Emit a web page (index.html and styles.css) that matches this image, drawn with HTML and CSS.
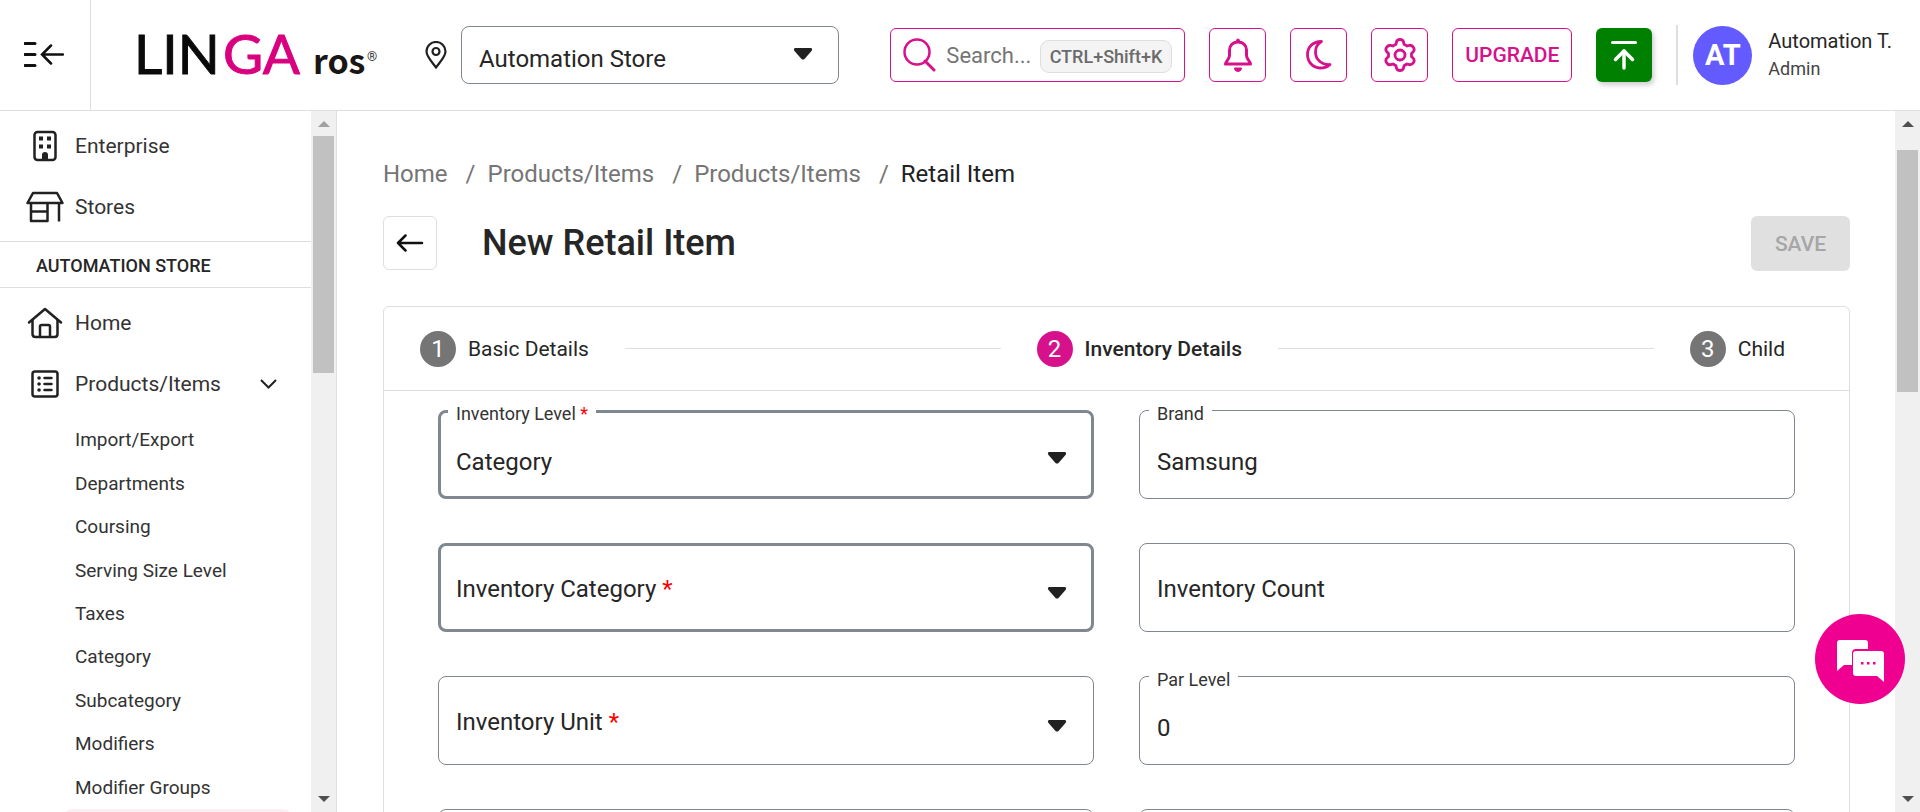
FILE: index.html
```html
<!DOCTYPE html>
<html lang="en">
<head>
<meta charset="utf-8">
<title>New Retail Item</title>
<meta name="viewport" content="width=device-width, initial-scale=1">
<link rel="stylesheet" href="styles.css">
</head>
<body>
<header class="topbar">
  <button class="collapse" aria-label="Collapse menu">
    <svg width="40" height="26" viewBox="0 0 40 26" fill="none" stroke="#111" stroke-width="3" stroke-linecap="round"><path d="M1 1.500H11M1 12.500H11M1 23.500H11"/><path d="M18 12.500H39M27 3.500L18 12.500L27 21.500" stroke-width="2.500"/></svg>
  </button>
  <a class="logo" href="#" aria-label="Linga ros">
    <svg width="244" height="44" viewBox="0 0 244 44">
      <text class="logo-main" x="-5" y="41">LIN</text>
      <text class="logo-main logo-pink" x="84" y="41">GA</text>
      <text class="logo-sub" x="174" y="41">ros</text>
      <text class="logo-reg" x="228" y="28">®</text>
    </svg>
  </a>
  <div class="store">
    <svg width="22" height="28" viewBox="0 0 22 28" fill="none" stroke="#212121" stroke-width="2.200"><path d="M11 26.500C7 21 1.500 15.500 1.500 10.500a9.500 9.500 0 0 1 19 0C20.500 15.500 15 21 11 26.500Z" stroke-linejoin="round"/><circle cx="11" cy="10.500" r="3.500"/></svg>
    <div class="store-box">
      <select class="store-select" aria-label="Store"><option>Automation Store</option></select>
      <svg class="store-caret" width="20" height="12" viewBox="0 0 20 12"><path d="M2 0H18Q20 1 18.500 3L11.500 11Q10 12 8.500 11L1.500 3Q0 1 2 0Z" fill="#212121"/></svg>
    </div>
  </div>
  <div class="actions">
    <label class="search">
      <svg width="33" height="34" viewBox="0 0 33 34" fill="none" stroke="#d6118b" stroke-width="2.500"><circle cx="14" cy="14" r="12.500"/><path d="M22 23L31 32" stroke-width="3" stroke-linecap="round"/></svg>
      <input class="search-input" type="text" placeholder="Search...">
      <kbd class="shortcut">CTRL+Shift+K</kbd>
    </label>
    <button class="icon-btn" aria-label="Notifications">
      <svg width="28" height="34" viewBox="0 0 28 34"><path d="M14 4C8.500 4 5.500 8 5.500 12V17.500C5.500 21 2 23 1.500 26H26.500C26 23 22.500 21 22.500 17.500V12C22.500 8 19.500 4 14 4Z" fill="none" stroke="#d6118b" stroke-width="3" stroke-linejoin="round"/><path d="M12.500 4V2.500a1.500 1.500 0 0 1 3 0V4ZM10.500 30H17.500a3.500 3.500 0 0 1-7 0Z" fill="#d6118b" stroke="#d6118b" stroke-width="1"/></svg>
    </button>
    <button class="icon-btn" aria-label="Dark mode">
      <svg width="26" height="30" viewBox="0 0 26 30"><path d="M15.500 1.500C6 1.500 1.500 8 1.500 14.500C1.500 22 7 28 14 28C18.500 28 22 26.500 24 24.500C15.500 25 9.500 19.500 9.500 12C9.500 7.500 12 3.500 15.500 1.500Z" fill="none" stroke="#d6118b" stroke-width="2.800" stroke-linejoin="round"/></svg>
    </button>
    <button class="icon-btn" aria-label="Settings">
      <svg width="32" height="34" viewBox="0 0 32 34" fill="none" stroke="#d6118b" stroke-width="2.800" stroke-linejoin="round"><path d="M12.500 4Q13 1.500 16 1.500T19.500 4L20.200 6.500Q21.500 7 23 8L25.500 7.300Q28 6.800 29.500 9.500T29 14L27.500 15.500V18.500L29 20Q31 22 29.500 24.500T25.500 26.700L23 26Q21.500 27 20.200 27.500L19.500 30Q19 32.500 16 32.500T12.500 30L11.800 27.500Q10.500 27 9 26L6.500 26.700Q4 27.200 2.500 24.500T3 20L4.500 18.500V15.500L3 14Q1 12 2.500 9.500T6.500 7.300L9 8Q10.500 7 11.800 6.500Z"/><circle cx="16" cy="17" r="5"/></svg>
    </button>
    <button class="upgrade">UPGRADE</button>
    <button class="upload" aria-label="Upload">
      <svg width="26" height="30" viewBox="0 0 26 30" fill="none" stroke="#fff" stroke-width="3.500"><path d="M1.500 2.500H24.500" stroke-width="3" stroke-linecap="round"/><path d="M13 28V11" stroke-linecap="round"/><path d="M4.500 19.500L13 11L21.500 19.500" stroke-linecap="round" stroke-linejoin="round"/></svg>
    </button>
    <div class="user">
      <span class="avatar">AT</span>
      <span class="user-text"><span class="user-name">Automation T.</span><span class="user-role">Admin</span></span>
    </div>
  </div>
</header>
<div class="body">
  <aside class="sidebar">
    <nav class="nav">
      <div class="group group-top">
        <a class="nav-item" href="#"><span class="nav-icon"><svg width="24" height="32" viewBox="0 0 24 32"><rect x="1.500" y="2" width="21" height="28" rx="3" fill="none" stroke="#212121" stroke-width="2.500"/><path d="M6 6.500h4v4H6zM14 6.500h4v4h-4zM6 14.500h4v4H6zM14 14.500h4v4h-4zM9 30v-5a3 3 0 0 1 6 0v5Z" fill="#212121"/></svg></span>Enterprise</a>
        <a class="nav-item" href="#"><span class="nav-icon"><svg width="38" height="32" viewBox="0 0 38 32" fill="none" stroke="#212121" stroke-width="2.500" stroke-linejoin="round"><path d="M7 2H31L36.500 12H1.500ZM5 12V30H21.500V12M5 20.500H21.500M33 12V30.500"/></svg></span>Stores</a>
      </div>
      <div class="section">AUTOMATION STORE</div>
      <div class="group group-main">
        <a class="nav-item" href="#"><span class="nav-icon"><svg width="36" height="32" viewBox="0 0 36 32" fill="none" stroke="#212121" stroke-width="2.500" stroke-linecap="round" stroke-linejoin="round"><path d="M2 15.500L18 2L34 15.500"/><path d="M5.500 13V27Q5.500 30 8.500 30H27.500Q30.500 30 30.500 27V13M13 30V19.500Q13 18 14.500 18H21.500Q23 18 23 19.500V30"/></svg></span>Home</a>
        <a class="nav-item" href="#"><span class="nav-icon"><svg width="28" height="28" viewBox="0 0 28 28" fill="none" stroke="#212121" stroke-width="2.500" stroke-linecap="round"><rect x="1.500" y="1.500" width="25" height="25" rx="2.500"/><path d="M13.500 8H20.500M13.500 14H20.500M13.500 20H20.500"/><path d="M8 8h.1M8 14h.1M8 20h.1" stroke-width="3.500"/></svg></span>Products/Items<svg class="chevron" width="17" height="10" viewBox="0 0 17 10" fill="none" stroke="#212121" stroke-width="2"><path d="M1 1L8.500 8.500L16 1"/></svg></a>
      </div>
      <div class="subnav">
        <a href="#">Import/Export</a>
        <a href="#">Departments</a>
        <a href="#">Coursing</a>
        <a href="#">Serving Size Level</a>
        <a href="#">Taxes</a>
        <a href="#">Category</a>
        <a href="#">Subcategory</a>
        <a href="#">Modifiers</a>
        <a href="#">Modifier Groups</a>
      </div>
      <a class="active-item" href="#" aria-label="Current page"></a>
    </nav>
    <div class="scroll scroll-side" aria-hidden="true"><span class="arrow-up dim"></span><span class="thumb thumb-side"></span><span class="arrow-down"></span></div>
  </aside>
  <main class="main">
    <nav class="crumbs" aria-label="Breadcrumb">
      <a href="#">Home</a><span class="sep">/</span><a href="#">Products/Items</a><span class="sep">/</span><a href="#">Products/Items</a><span class="sep">/</span><span class="current">Retail Item</span>
    </nav>
    <div class="title-row">
      <button class="back" aria-label="Back"><svg width="28" height="18" viewBox="0 0 28 18" fill="none" stroke="#111" stroke-width="2.500" stroke-linecap="round" stroke-linejoin="round"><path d="M26 9H2M9.500 1.500L2 9L9.500 16.500"/></svg></button>
      <h1 class="title">New Retail Item</h1>
      <button class="save" disabled>SAVE</button>
    </div>
    <section class="card">
      <div class="stepper">
        <span class="step"><span class="num">1</span>Basic Details</span>
        <span class="line"></span>
        <span class="step step-on"><span class="num">2</span>Inventory Details</span>
        <span class="line"></span>
        <span class="step"><span class="num">3</span>Child</span>
      </div>
      <form class="fields">
        <div class="field strong floated">
          <select id="level"><option>Category</option></select>
          <label for="level">Inventory Level <span class="req">*</span></label>
          <svg class="caret" width="20" height="12" viewBox="0 0 20 12"><path d="M2 0H18Q20 1 18.500 3L11.500 11Q10 12 8.500 11L1.500 3Q0 1 2 0Z"/></svg>
        </div>
        <div class="field floated">
          <input id="brand" type="text" value="Samsung">
          <label for="brand">Brand</label>
        </div>
        <div class="field strong">
          <select id="category"><option></option></select>
          <label for="category">Inventory Category <span class="req">*</span></label>
          <svg class="caret" width="20" height="12" viewBox="0 0 20 12"><path d="M2 0H18Q20 1 18.500 3L11.500 11Q10 12 8.500 11L1.500 3Q0 1 2 0Z"/></svg>
        </div>
        <div class="field">
          <input id="count" type="text">
          <label for="count">Inventory Count</label>
        </div>
        <div class="field">
          <select id="unit"><option></option></select>
          <label for="unit">Inventory Unit <span class="req">*</span></label>
          <svg class="caret" width="20" height="12" viewBox="0 0 20 12"><path d="M2 0H18Q20 1 18.500 3L11.500 11Q10 12 8.500 11L1.500 3Q0 1 2 0Z"/></svg>
        </div>
        <div class="field floated">
          <input id="par" type="text" value="0">
          <label for="par">Par Level</label>
        </div>
        <div class="field"><input type="text" aria-label="Next field"></div>
        <div class="field"><input type="text" aria-label="Next field"></div>
      </form>
    </section>
  </main>
  <div class="scroll" aria-hidden="true"><span class="arrow-up"></span><span class="thumb thumb-main"></span><span class="arrow-down"></span></div>
</div>
<button class="chat" aria-label="Chat">
  <svg width="48" height="43" viewBox="0 0 48 43"><path d="M3 0H28Q31 0 31 3V9H19Q15 9 15 13V25H7L0 31V3Q0 0 3 0Z" fill="#fff"/><path d="M19 11H44Q47 11 47 14V42L40 36H19Q16 36 16 33V14Q16 11 19 11Z" fill="#fff"/><path d="M24 22h2.500v2.500H24zM30 22h2.500v2.500H30zM36 22h2.500v2.500H36z" fill="#f00091"/></svg>
</button>
</body>
</html>
```
FILE: styles.css
```css
* { box-sizing: border-box; }

body {
  margin: 0;
  height: 100vh;
  display: flex;
  flex-direction: column;
  overflow: hidden;
  background: #fff;
  color: #262626;
  font-family: Roboto, "Liberation Sans", sans-serif;
  font-size: 24px;
}

a { color: inherit; text-decoration: none; }
button, input, select { font: inherit; color: inherit; margin: 0; }
svg { display: block; flex: none; }

/* Top bar */
.topbar {
  flex: none;
  height: 111px;
  display: flex;
  align-items: center;
  border-bottom: 1px solid #dedede;
}
.collapse {
  align-self: stretch;
  width: 91px;
  padding: 0 3px 0 0;
  border: 0;
  border-right: 1px solid #dedede;
  background: none;
  display: flex;
  align-items: center;
  justify-content: center;
}
.logo { margin-left: 48px; }
.logo svg { overflow: visible; }
.logo-main { font-family: Lato, sans-serif; font-size: 55px; fill: #0a0a0a; stroke: #0a0a0a; stroke-width: 1px; }
.logo-pink { fill: #d9007f; stroke: #d9007f; }
.logo-sub { font-family: "Noto Sans CJK JP", sans-serif; font-weight: 700; font-size: 34px; fill: #1a1616; }
.logo-reg { font-size: 13px; fill: #333; }
.store { display: flex; align-items: center; gap: 14px; margin-left: 42px; }
.store-box { position: relative; width: 378px; }
.store-select {
  appearance: none;
  width: 100%;
  height: 58px;
  padding: 8px 48px 0 17px;
  border: 1px solid #7f8790;
  border-radius: 8px;
  background: #fff;
}
.store-caret { position: absolute; right: 26px; top: 22px; }
.actions { margin-left: auto; display: flex; align-items: center; gap: 24px; padding-right: 28px; }
.search {
  display: flex;
  align-items: center;
  width: 295px;
  height: 54px;
  padding: 0 12px;
  border: 1px solid #d6118b;
  border-radius: 6px;
}
.search-input {
  flex: 1;
  min-width: 0;
  padding: 0 0 0 10px;
  border: 0;
  outline: 0;
  background: none;
  font-size: 22px;
}
.search-input::placeholder { color: #757575; opacity: 1; }
.shortcut {
  height: 33px;
  margin-top: 3px;
  padding: 0 9px;
  border: 1px solid #dedede;
  border-radius: 9px;
  background: #f4f4f4;
  color: #6b6b6b;
  font: 500 18px/32px Roboto, sans-serif;
}
.icon-btn, .upgrade {
  height: 54px;
  padding: 0;
  border: 1px solid #d6118b;
  border-radius: 6px;
  background: #fff;
  color: #d6118b;
  display: flex;
  align-items: center;
  justify-content: center;
}
.icon-btn { width: 57px; }
.upgrade { width: 120px; font-size: 21px; font-weight: 500; }
.upload {
  width: 56px;
  height: 54px;
  padding: 0;
  border: 0;
  border-radius: 6px;
  background: #008000;
  box-shadow: 2px 3px 5px #0003;
  display: flex;
  align-items: center;
  justify-content: center;
}
.user { display: flex; align-items: center; gap: 16px; height: 60px; padding-left: 15px; border-left: 2px solid #dedede; }
.avatar {
  width: 59px;
  height: 59px;
  border-radius: 50%;
  background: #635bff;
  color: #fff;
  font: 700 29px/59px Roboto, sans-serif;
  text-align: center;
}
.user-text { display: flex; flex-direction: column; gap: 4px; }
.user-name { font-size: 20px; line-height: 24px; }
.user-role { font-size: 18px; line-height: 24px; color: #444; }

/* Sidebar */
.body { flex: 1; min-height: 0; display: flex; }
.sidebar { flex: none; width: 337px; display: flex; border-right: 1px solid #dedede; }
.nav { flex: 1; overflow: auto; scrollbar-width: none; }
.group { display: flex; flex-direction: column; }
.group-top { padding: 4px 0; }
.group-main { padding: 4px 0 0; }
.nav-item { display: flex; align-items: center; height: 61px; font-size: 21px; color: #333; }
.nav-icon { width: 75px; margin-left: 7px; margin-right: -7px; display: flex; justify-content: center; }
.chevron { margin-left: auto; margin-right: 34px; }
.section {
  height: 47px;
  padding-left: 36px;
  border: solid #dedede;
  border-width: 1px 0;
  font-size: 18px;
  line-height: 48px;
  font-weight: 500;
}
.subnav { display: grid; grid-auto-rows: 1fr; height: 391px; margin-top: 4px; padding-left: 75px; font-size: 19px; color: #333; }
.subnav a { display: flex; align-items: center; }
.active-item { display: block; height: 44px; margin: 0 18px 0 62px; border-radius: 10px; background: #fceff3; }

/* Scroll bars */
.scroll {
  flex: none;
  width: 25px;
  padding: 10px 0;
  background: #f0f0f0;
  display: flex;
  flex-direction: column;
  align-items: center;
}
.arrow-up, .arrow-down { border: 6px solid transparent; border-width: 0 6px; }
.arrow-up { border-bottom: 6px solid #505050; }
.arrow-up.dim { border-bottom-color: #a0a0a0; }
.arrow-down { border-top: 6px solid #505050; margin-top: auto; }
.thumb { width: 21px; background: #c1c1c1; }
.thumb-side { height: 237px; margin-top: 9px; }
.thumb-main { height: 242px; margin-top: 23px; }

/* Page content */
.main { flex: 1; min-width: 0; overflow: auto; scrollbar-width: none; padding: 48px 45px 0 46px; }
.crumbs { display: flex; line-height: 30px; color: #757575; }
.sep { padding: 0 12px 0 18px; }
.current { color: #212121; }
.title-row { display: flex; align-items: flex-start; margin-top: 27px; }
.back {
  width: 54px;
  height: 54px;
  padding: 0;
  border: 1px solid #dedede;
  border-radius: 6px;
  background: #fff;
  display: flex;
  align-items: center;
  justify-content: center;
}
.title { margin: 0 0 0 45px; font-size: 36px; line-height: 54px; font-weight: 500; }
.save {
  margin-left: auto;
  width: 99px;
  height: 55px;
  padding: 0;
  border: 0;
  border-radius: 6px;
  background: #e0e0e0;
  color: #a6a6a6;
  font-size: 21px;
  font-weight: 500;
}
.card { margin-top: 35px; border: 1px solid #dedede; border-radius: 6px; }
.stepper {
  display: flex;
  align-items: center;
  gap: 36px;
  height: 84px;
  padding: 0 64px 0 36px;
  border-bottom: 1px solid #dedede;
  font-size: 21px;
}
.step { display: flex; align-items: center; gap: 12px; }
.step-on { font-weight: 500; }
.num {
  width: 36px;
  height: 36px;
  border-radius: 50%;
  background: #757575;
  color: #fff;
  font-size: 24px;
  line-height: 36px;
  font-weight: 400;
  text-align: center;
}
.step-on .num { background: #d6118b; }
.line { flex: 1; height: 1px; background: #dedede; }

.fields { display: grid; grid-template-columns: 1fr 1fr; gap: 44px 45px; padding: 19px 54px; }
.field { position: relative; }
.field input, .field select {
  display: block;
  appearance: none;
  width: 100%;
  height: 89px;
  padding: 14px 17px 0;
  border: 1px solid #7f8790;
  border-radius: 8px;
  background: #fff;
  outline: 0;
}
.field.strong select { border-width: 3px; padding: 14px 15px 0; }
.field label { position: absolute; left: 18px; top: 30px; line-height: 32px; pointer-events: none; }
.field.floated label { left: 10px; top: -8px; padding: 0 8px; background: #fff; font-size: 18px; line-height: 24px; color: #333; }
.req { color: #f00; }
.caret { position: absolute; right: 27px; top: 44px; fill: #212121; pointer-events: none; }
.floated .caret { top: 42px; }

.chat {
  position: fixed;
  right: 15px;
  bottom: 108px;
  width: 90px;
  height: 90px;
  padding: 4px 0 0 2px;
  border: 0;
  border-radius: 50%;
  background: #f00091;
  display: flex;
  align-items: center;
  justify-content: center;
}
```
